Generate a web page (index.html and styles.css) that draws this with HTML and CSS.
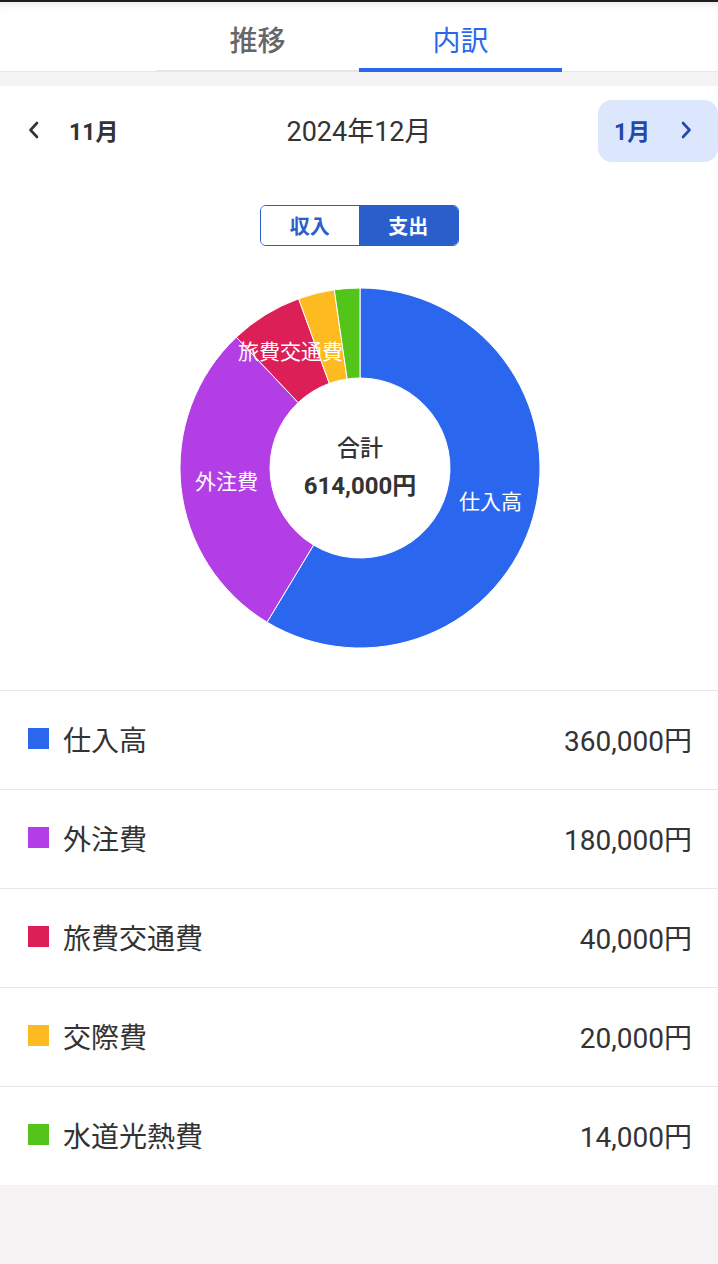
FILE: index.html
```html
<!DOCTYPE html>
<html lang="ja">
<head>
<meta charset="utf-8">
<title>内訳</title>
<link rel="stylesheet" href="styles.css">
</head>
<body>
<header class="tabs">
  <div class="tab">推移</div>
  <div class="tab active">内訳</div>
</header>
<div class="gap"></div>
<main class="card">
  <div class="nav">
    <div class="prev">
      <svg class="chev" width="14" height="18" viewBox="0 0 14 18"><path d="M10 2 L3.5 9 L10 16" fill="none" stroke="#333" stroke-width="2.6" stroke-linecap="round" stroke-linejoin="round"/></svg>
      <span class="prev-label">11月</span>
    </div>
    <div class="title">2024年12月</div>
    <div class="next">
      <span class="next-label">1月</span>
      <svg class="chev" width="14" height="18" viewBox="0 0 14 18"><path d="M4 2 L10.5 9 L4 16" fill="none" stroke="#2547a8" stroke-width="2.6" stroke-linecap="round" stroke-linejoin="round"/></svg>
    </div>
  </div>
  <div class="toggle-wrap">
    <div class="toggle">
      <div class="seg">収入</div>
      <div class="seg on">支出</div>
    </div>
  </div>
  <div class="chart">
    <svg width="360" height="360" viewBox="0 0 360 360">
      <g stroke="#fff" stroke-width="1" stroke-linejoin="round">
        <path fill="#2b67ee" d="M180,0 A180,180 0 1 1 87.09,334.17 L133.55,257.09 A90,90 0 1 0 180,90 Z"/>
        <path fill="#b33ee5" d="M87.09,334.17 A180,180 0 0 1 56.35,49.19 L118.17,114.59 A90,90 0 0 0 133.55,257.09 Z"/>
        <path fill="#dc1f56" d="M56.35,49.19 A180,180 0 0 1 118.63,10.79 L149.31,95.39 A90,90 0 0 0 118.17,114.59 Z"/>
        <path fill="#fdba21" d="M118.63,10.79 A180,180 0 0 1 154.30,1.84 L167.15,90.92 A90,90 0 0 0 149.31,95.39 Z"/>
        <path fill="#52c41a" d="M154.30,1.84 A180,180 0 0 1 180,0 L180,90 A90,90 0 0 0 167.15,90.92 Z"/>
      </g>
      <g class="seg-label">
        <text x="310.5" y="214">仕入高</text>
        <text x="46.5" y="194">外注費</text>
        <text x="110.5" y="64">旅費交通費</text>
      </g>
      <text class="sum-title" x="180" y="160">合計</text>
      <text class="sum-value" x="180" y="198">614,000円</text>
    </svg>
  </div>
  <ul class="list">
    <li class="row"><span class="sw c1"></span><span class="name">仕入高</span><span class="amt">360,000円</span></li>
    <li class="row"><span class="sw c2"></span><span class="name">外注費</span><span class="amt">180,000円</span></li>
    <li class="row"><span class="sw c3"></span><span class="name">旅費交通費</span><span class="amt">40,000円</span></li>
    <li class="row"><span class="sw c4"></span><span class="name">交際費</span><span class="amt">20,000円</span></li>
    <li class="row"><span class="sw c5"></span><span class="name">水道光熱費</span><span class="amt">14,000円</span></li>
  </ul>
</main>
</body>
</html>
```
FILE: styles.css
```css
* { box-sizing: border-box; }
html, body {
  margin: 0;
  padding: 0;
  background: #f5f3f4;
  font-family: Roboto, "Noto Sans CJK JP", sans-serif;
  color: #333;
}
.tabs {
  height: 72px;
  background: #fff;
  display: flex;
  justify-content: center;
  border-top: 2px solid #1f1f1f;
  box-shadow: inset 0 -1px 0 #e6e6e6, inset 0 8px 8px -6px rgba(0,0,0,0.10);
}
.tab {
  width: 203px;
  height: 70px;
  display: flex;
  align-items: center;
  justify-content: center;
  padding-top: 4px;
  font-size: 28px;
  font-weight: 500;
  color: #666;
  box-shadow: inset 0 -2px 0 #e6e6e6;
}
.tab.active {
  color: #2b67ee;
  font-weight: 400;
  box-shadow: inset 0 -4px 0 #2b67ee;
}
.gap { height: 14px; }
.card {
  background: #fff;
  padding-top: 14px;
}
.nav {
  height: 62px;
  display: grid;
  grid-template-columns: 1fr auto 1fr;
  align-items: center;
}
.prev {
  display: flex;
  align-items: center;
  padding-left: 27px;
  gap: 28px;
  padding-bottom: 3px;
}
.prev-label {
  font-size: 23px;
  font-weight: 700;
  color: #333;
}
.title {
  font-size: 27px;
  color: #333;
  padding-bottom: 3px;
}
.next {
  justify-self: end;
  width: 120px;
  height: 62px;
  background: #dce7fd;
  border-radius: 14px;
  display: flex;
  align-items: center;
  padding-left: 16px;
  padding-bottom: 3px;
  gap: 29px;
}
.next-label {
  font-size: 23px;
  font-weight: 700;
  color: #2547a8;
}
.chev { display: block; }
.toggle-wrap {
  display: flex;
  justify-content: center;
  padding-top: 43px;
}
.toggle {
  display: flex;
  width: 199px;
  height: 41px;
  border: 1px solid #2a5fcb;
  border-radius: 6px;
  overflow: hidden;
}
.seg {
  flex: 1;
  display: flex;
  align-items: center;
  justify-content: center;
  font-size: 20px;
  font-weight: 700;
  color: #2a5fcb;
  background: #fff;
}
.seg.on {
  background: #2a5fcb;
  color: #fff;
}
.chart {
  display: flex;
  justify-content: center;
  padding: 42px 0 42px 1px;
}
.chart svg { display: block; }
.seg-label text {
  fill: #fff;
  font-size: 21px;
  text-anchor: middle;
  dominant-baseline: central;
}
.sum-title {
  fill: #333;
  font-size: 23px;
  font-weight: 500;
  text-anchor: middle;
  dominant-baseline: central;
}
.sum-value {
  fill: #333;
  font-size: 24px;
  font-weight: 700;
  text-anchor: middle;
  dominant-baseline: central;
}
.list {
  list-style: none;
  margin: 0;
  padding: 0;
}
.row {
  height: 99px;
  border-top: 1px solid #e6e6e6;
  display: flex;
  align-items: center;
  padding: 0 26px 3px 28px;
}
.sw {
  width: 21px;
  height: 21px;
  margin-right: 14px;
  flex: none;
}
.c1 { background: #2b67ee; }
.c2 { background: #b33ee5; }
.c3 { background: #dc1f56; }
.c4 { background: #fdba21; }
.c5 { background: #52c41a; }
.name {
  font-size: 28px;
  color: #333;
  flex: 1;
}
.amt {
  font-size: 28px;
  color: #333;
}
```
